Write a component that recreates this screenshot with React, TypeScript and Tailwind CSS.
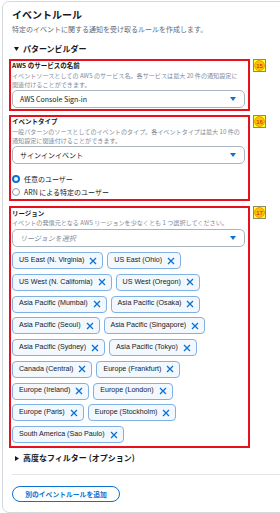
import React from 'react';

const jp = { fontFamily: '"Noto Sans CJK JP", "Noto Sans", sans-serif' };
const latin = { fontFamily: '"Liberation Sans", "Noto Sans CJK JP", sans-serif' };

const rows: string[][] = [
  ['US East (N. Virginia)', 'US East (Ohio)'],
  ['US West (N. California)', 'US West (Oregon)'],
  ['Asia Pacific (Mumbai)', 'Asia Pacific (Osaka)'],
  ['Asia Pacific (Seoul)', 'Asia Pacific (Singapore)'],
  ['Asia Pacific (Sydney)', 'Asia Pacific (Tokyo)'],
  ['Canada (Central)', 'Europe (Frankfurt)'],
  ['Europe (Ireland)', 'Europe (London)'],
  ['Europe (Paris)', 'Europe (Stockholm)'],
  ['South America (Sao Paulo)'],
];

function Caret() {
  return (
    <svg width="6" height="4" viewBox="0 0 6 4" className="shrink-0">
      <path d="M0 0 H6 L3 4 Z" fill="#0972d3" />
    </svg>
  );
}

function Select({ text, placeholder }: { text: string; placeholder?: boolean }) {
  return (
    <div className="ml-[1px] mr-[3px] h-[18px] flex items-center justify-between pl-[7px] pr-[8px] border border-[#aab4be] rounded-[5px] bg-white">
      <span
        className={
          placeholder
            ? 'text-[7px] italic text-[#7d8998] leading-none'
            : 'text-[7px] text-[#16191f] leading-none'
        }
        style={jp}
      >
        {text}
      </span>
      <Caret />
    </div>
  );
}

function Badge({ n }: { n: string }) {
  return (
    <div className="ml-[3px] w-[13px] h-[13px] shrink-0 bg-[#ffff33] border border-[#8c8c5c] flex items-center justify-center">
      <svg width="11" height="11" viewBox="0 0 11 11">
        <circle cx="5.5" cy="5.5" r="5" fill="#ffc000" stroke="#e07000" strokeWidth="0.6" />
        <text
          x="5.5"
          y="7.6"
          textAnchor="middle"
          fontSize="6"
          fill="#c81010"
          fontFamily="Liberation Sans, sans-serif"
        >
          {n}
        </text>
      </svg>
    </div>
  );
}

function Chip({ label }: { label: string }) {
  return (
    <div className="h-[17px] flex items-center pl-[6px] pr-[5px] border border-[#7fb1e3] rounded-[4px] bg-[#f2f8fd]">
      <span className="text-[7.1px] leading-none text-[#16191f] whitespace-nowrap" style={latin}>
        {label}
      </span>
      <svg width="8" height="8" viewBox="0 0 8 8" className="ml-[5px]">
        <path d="M1 1 L7 7 M7 1 L1 7" stroke="#0972d3" strokeWidth="1.3" />
      </svg>
    </div>
  );
}

export default function App() {
  return (
    <div className="w-[280px] h-[513px] bg-white overflow-hidden pt-[1px] pl-[2px]" style={jp}>
      <div className="w-[300px] h-[512px] border border-[#d5d9dd] rounded-[7px] pl-[6px] pt-[6px]">
        <div className="ml-[3px] text-[10px] leading-[14px] font-bold text-[#16191f]">イベントルール</div>
        <div className="ml-[3px] mt-[2px] text-[7px] leading-[10px] text-[#5f6b7a]">
          特定のイベントに関する通知を受け取るルールを作成します。
        </div>
        <div className="ml-[5px] mt-[9px] h-[12px] flex items-center gap-[4px]">
          <svg width="5" height="4" viewBox="0 0 5 4">
            <path d="M0 0 H5 L2.5 4 Z" fill="#16191f" />
          </svg>
          <span className="text-[8px] leading-none font-bold text-[#16191f]">パターンビルダー</span>
        </div>

        <div className="mt-[4px] flex items-start">
          <div className="w-[241px] border-2 border-[#e8101c] pb-[1px]">
            <div className="ml-[1px] text-[6.5px] leading-[9px] font-bold text-[#16191f]">AWS のサービスの名前</div>
            <div className="ml-[1px] mt-[0.5px] text-[6.1px] leading-[9px] text-[#7d8998] whitespace-nowrap">
              イベントソースとしての AWS のサービス名。各サービスは最大 20 件の通知設定に
              <br />
              関連付けることができます。
            </div>
            <div className="mt-[1.5px]">
              <Select text="AWS Console Sign-in" />
            </div>
          </div>
          <Badge n="15" />
        </div>

        <div className="mt-[4px] flex items-start">
          <div className="w-[241px] border-2 border-[#e8101c] pb-[1px]">
            <div className="ml-[1px] text-[6.5px] leading-[9px] font-bold text-[#16191f]">イベントタイプ</div>
            <div className="ml-[1px] mt-[0.5px] text-[6.1px] leading-[9px] text-[#7d8998] whitespace-nowrap">
              一般パターンのソースとしてのイベントのタイプ。各イベントタイプは最大 10 件の
              <br />
              通知設定に関連付けることができます。
            </div>
            <div className="mt-[1.5px]">
              <Select text="サインインイベント" />
            </div>
            <div className="mt-[9px] flex flex-col gap-[1px]">
              <div className="h-[12px] flex items-center gap-[4px] ml-[1px]">
                <div className="w-[8px] h-[8px] rounded-full border-[2.5px] border-[#0972d3] bg-white" />
                <span className="text-[7px] leading-none text-[#16191f]">任意のユーザー</span>
              </div>
              <div className="h-[12px] flex items-center gap-[4px] ml-[1px]">
                <div className="w-[8px] h-[8px] rounded-full border border-[#8d99a8] bg-white" />
                <span className="text-[7px] leading-none text-[#16191f]">ARN による特定のユーザー</span>
              </div>
            </div>
          </div>
          <Badge n="16" />
        </div>

        <div className="mt-[5px] flex items-start">
          <div className="w-[241px] border-2 border-[#e8101c] pt-[1px] pb-[3px]">
            <div className="ml-[1px] text-[6.5px] leading-[9px] font-bold text-[#16191f]">リージョン</div>
            <div className="ml-[1px] text-[6.1px] leading-[9px] text-[#7d8998] whitespace-nowrap">
              イベントの発信元となる AWS リージョンを少なくとも 1 つ選択してください。
            </div>
            <div className="mt-[2px]">
              <Select text="リージョンを選択" placeholder />
            </div>
            <div className="mt-[5px] ml-[1px] flex flex-col gap-y-[4.75px]">
              {rows.map((r, i) => (
                <div key={i} className="flex gap-[4px]">
                  {r.map(l => (
                    <Chip key={l} label={l} />
                  ))}
                </div>
              ))}
            </div>
          </div>
          <Badge n="17" />
        </div>

        <div className="ml-[6px] mt-[4px] h-[12px] flex items-center gap-[4px]">
          <svg width="4" height="5" viewBox="0 0 4 5">
            <path d="M0 0 V5 L4 2.5 Z" fill="#16191f" />
          </svg>
          <span className="text-[8px] leading-none font-bold text-[#16191f]">高度なフィルター (オプション)</span>
        </div>

        <div className="ml-[3px] mt-[10px] h-px bg-[#e1e4e8]" />

        <div className="ml-[3px] mt-[11px] w-[108px] h-[16px] rounded-full border border-[#0972d3] flex items-center justify-center">
          <span className="text-[6.8px] leading-none font-bold text-[#0972d3]">別のイベントルールを追加</span>
        </div>
      </div>
    </div>
  );
}
